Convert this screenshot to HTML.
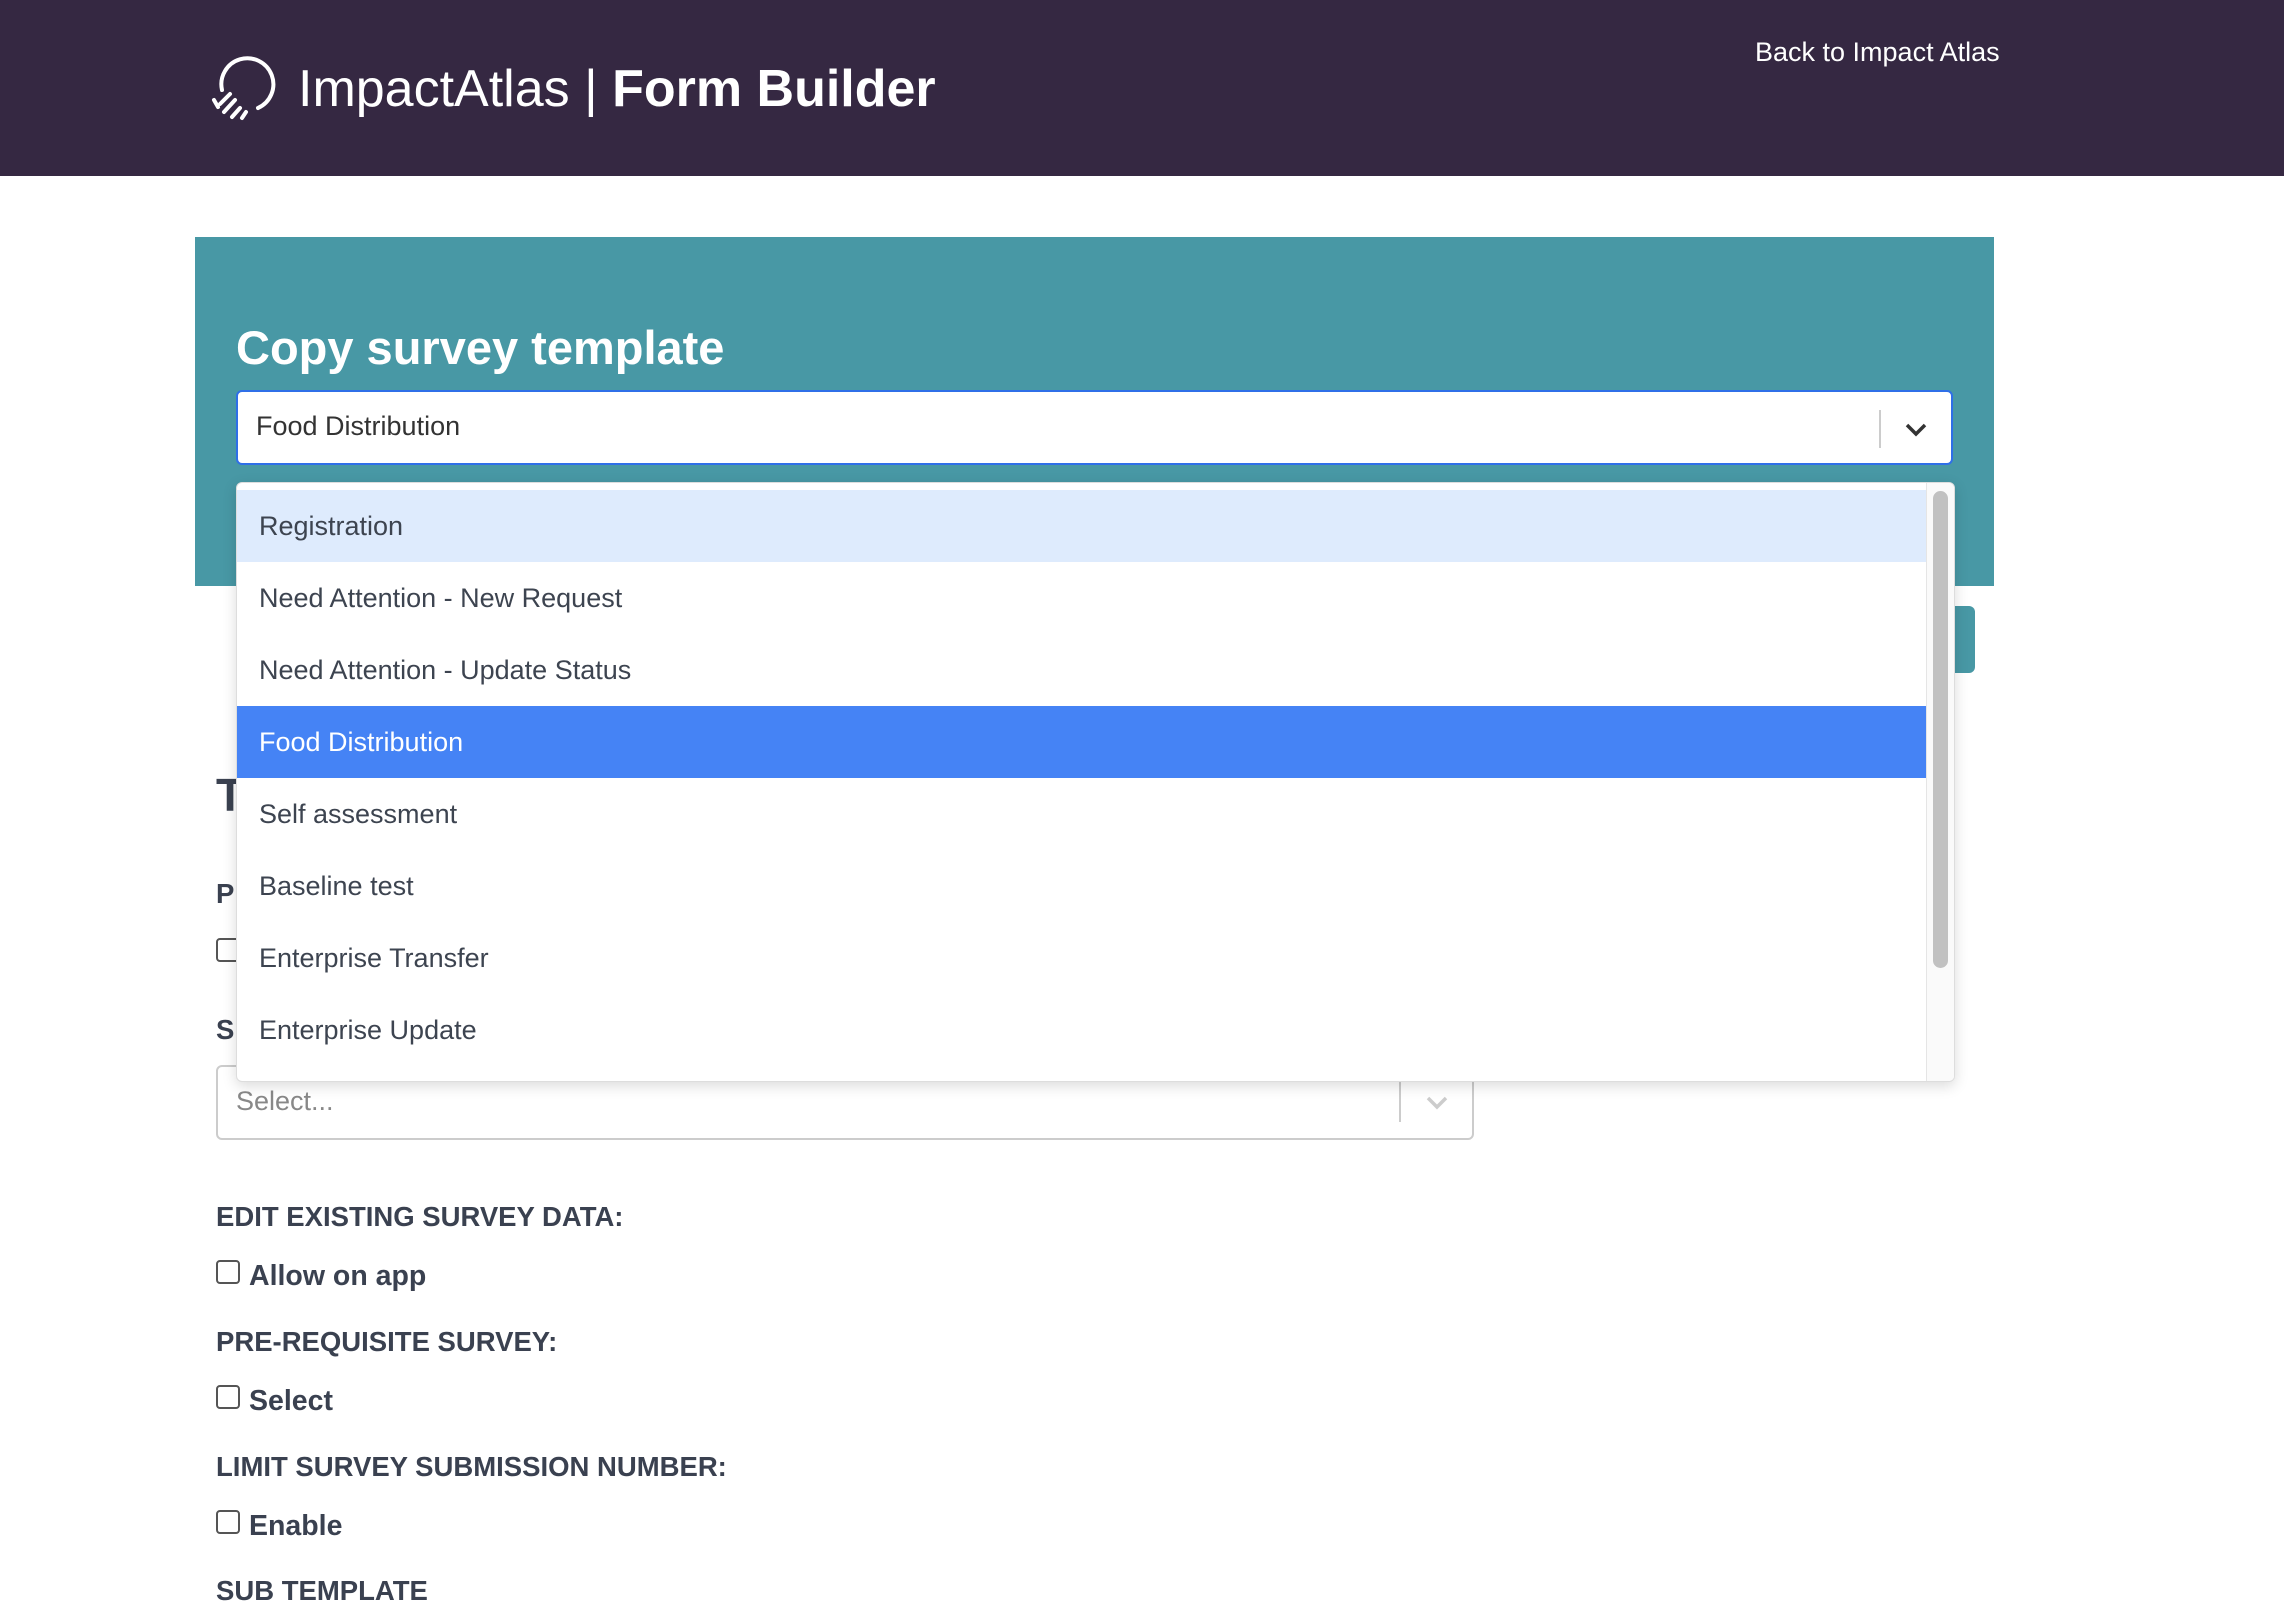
<!DOCTYPE html>
<html><head><meta charset="utf-8"><style>
*{box-sizing:border-box;margin:0;padding:0}
body{width:2284px;height:1624px;overflow:hidden;background:#fff;font-family:"Liberation Sans",sans-serif;color:#3a4150;position:relative}
.a{position:absolute}
.hdr{left:0;top:0;width:2284px;height:176px;background:#352842}
.lbl{font-weight:bold;font-size:27.5px;color:#3a4150;left:216px}
.cb{width:24px;height:24px;border:2px solid #555;border-radius:4px;background:#fff}
.item{position:absolute;left:0;width:1689px;height:72px;font-size:27px;color:#3d4450;padding-left:22px;line-height:72px}
</style></head><body>
<div class="a hdr"></div>
<svg class="a" style="left:208px;top:52px" width="72" height="70" viewBox="0 0 72 70">
<path d="M14 38 A26 26 0 1 1 50 56" fill="none" stroke="#fff" stroke-width="4" stroke-linecap="round"/>
<g stroke="#fff" stroke-width="4" stroke-linecap="round">
<line x1="6" y1="48" x2="10" y2="55"/><line x1="12" y1="52" x2="22" y2="42"/><line x1="16" y1="60" x2="27" y2="48"/><line x1="24" y1="65" x2="32" y2="56"/><line x1="34" y1="66" x2="38" y2="60"/>
</g></svg>
<div class="a" style="left:298px;top:57px;font-size:52px;color:#fff;white-space:nowrap;line-height:64px">ImpactAtlas | <b>Form Builder</b></div>
<div class="a" style="left:1755px;top:37px;font-size:27px;color:#fff">Back to Impact Atlas</div>

<div class="a" style="left:195px;top:237px;width:1799px;height:349px;background:#4898a5"></div>
<div class="a" style="left:236px;top:320px;font-size:47px;font-weight:bold;color:#fff">Copy survey template</div>
<div class="a" style="left:236px;top:390px;width:1717px;height:75px;background:#fff;border:2px solid #2f6fe8;border-radius:6px"></div>
<div class="a" style="left:256px;top:411px;font-size:27px;color:#333">Food Distribution</div>
<div class="a" style="left:1879px;top:410px;width:2px;height:38px;background:#ccc"></div>
<svg class="a" style="left:1903px;top:417px" width="26" height="24"><path d="M4 8 L13 17 L22 8" fill="none" stroke="#333" stroke-width="3.5"/></svg>
<div class="a" style="left:1955px;top:606px;width:20px;height:67px;background:#4898a5;border-radius:0 6px 6px 0"></div>

<div class="a" style="left:216px;top:768px;font-size:46px;font-weight:bold">T</div>
<div class="a lbl" style="top:878px">P</div>
<div class="a cb" style="left:216px;top:938px"></div>
<div class="a lbl" style="top:1014px">S</div>
<div class="a" style="left:216px;top:1065px;width:1258px;height:75px;border:2px solid #ccc;border-radius:6px"></div>
<div class="a" style="left:236px;top:1086px;font-size:27px;color:#888">Select...</div>
<div class="a" style="left:1399px;top:1080px;width:2px;height:42px;background:#ccc"></div>
<svg class="a" style="left:1424px;top:1090px" width="26" height="24"><path d="M4 8 L13 17 L22 8" fill="none" stroke="#ccc" stroke-width="3.5"/></svg>

<div class="a" style="left:236px;top:482px;width:1719px;height:600px;background:#fff;border:1px solid #ddd;border-radius:6px;box-shadow:0 4px 14px rgba(0,0,0,.15);overflow:hidden">
<div class="item" style="top:7px;background:#deebfd">Registration</div>
<div class="item" style="top:79px">Need Attention - New Request</div>
<div class="item" style="top:151px">Need Attention - Update Status</div>
<div class="item" style="top:223px;background:#4583f5;color:#fff">Food Distribution</div>
<div class="item" style="top:295px">Self assessment</div>
<div class="item" style="top:367px">Baseline test</div>
<div class="item" style="top:439px">Enterprise Transfer</div>
<div class="item" style="top:511px">Enterprise Update</div>
<div class="a" style="left:1689px;top:0;width:30px;height:600px;background:#fafafa;border-left:1px solid #e5e5e5"></div>
<div class="a" style="left:1696px;top:8px;width:15px;height:477px;background:#c1c1c1;border-radius:8px"></div>
</div>

<div class="a lbl" style="top:1201px">EDIT EXISTING SURVEY DATA:</div>
<div class="a cb" style="left:216px;top:1260px"></div>
<div class="a lbl" style="left:249px;top:1260px;font-size:28.5px">Allow on app</div>
<div class="a lbl" style="top:1326px">PRE-REQUISITE SURVEY:</div>
<div class="a cb" style="left:216px;top:1385px"></div>
<div class="a lbl" style="left:249px;top:1385px;font-size:28.5px">Select</div>
<div class="a lbl" style="top:1451px">LIMIT SURVEY SUBMISSION NUMBER:</div>
<div class="a cb" style="left:216px;top:1510px"></div>
<div class="a lbl" style="left:249px;top:1510px;font-size:28.5px">Enable</div>
<div class="a lbl" style="top:1575px">SUB TEMPLATE</div>
</body></html>
